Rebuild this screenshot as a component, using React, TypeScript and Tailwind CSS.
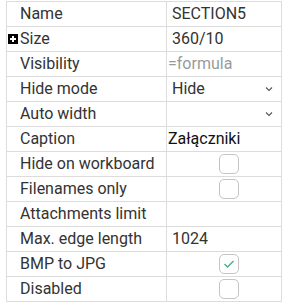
import React from "react";

type Row = {
  label: string;
  kind: "text" | "placeholder" | "select" | "check" | "empty" | "dark";
  value?: string;
  checked?: boolean;
  expand?: boolean;
};

const rows: Row[] = [
  { label: "Name", kind: "text", value: "SECTION5" },
  { label: "Size", kind: "text", value: "360/10", expand: true },
  { label: "Visibility", kind: "placeholder", value: "=formula" },
  { label: "Hide mode", kind: "select", value: "Hide" },
  { label: "Auto width", kind: "select", value: "" },
  { label: "Caption", kind: "dark", value: "Załączniki" },
  { label: "Hide on workboard", kind: "check" },
  { label: "Filenames only", kind: "check" },
  { label: "Attachments limit", kind: "empty" },
  { label: "Max. edge length", kind: "text", value: "1024" },
  { label: "BMP to JPG", kind: "check", checked: true },
  { label: "Disabled", kind: "check" },
];

function Chevron() {
  return (
    <svg width="8" height="6" viewBox="0 0 8 6" className="text-[#555]">
      <path d="M1 1.5 L4 4.5 L7 1.5" fill="none" stroke="currentColor" strokeWidth="1.1" />
    </svg>
  );
}

function Check({ checked }: { checked?: boolean }) {
  return (
    <div className="w-[20px] h-[20px] rounded-[5px] border border-[#c4c4c4] bg-white flex items-center justify-center">
      {checked && (
        <svg width="12" height="10" viewBox="0 0 12 10">
          <path d="M1.5 5 L4.5 8 L10.5 2" fill="none" stroke="#3fae8a" strokeWidth="1.3" />
        </svg>
      )}
    </div>
  );
}

function Value({ row }: { row: Row }) {
  switch (row.kind) {
    case "placeholder":
      return <span className="pl-[1px] text-[#9a9a9a]">{row.value}</span>;
    case "select":
      return (
        <div className="flex items-center justify-between pl-[5px] pr-[8px] w-full">
          <span>{row.value}</span>
          <Chevron />
        </div>
      );
    case "dark":
      return <span className="pl-[1px] text-[#111]">{row.value}</span>;
    case "check":
      return (
        <div className="w-full flex justify-center pl-[10px]">
          <Check checked={row.checked} />
        </div>
      );
    case "empty":
      return null;
    default:
      return <span className="pl-[5px]">{row.value}</span>;
  }
}

export default function App() {
  return (
    <div className="w-[286px] h-[304px] bg-white pt-[1px] pl-[6px]" style={{ fontFamily: "Roboto, sans-serif" }}>
      <div className="relative w-[276px] border-l border-r border-t border-[#dcdcdc] text-[16px] text-[#333]">
        {rows.map((row) => (
          <div key={row.label} className="relative flex h-[25px] border-b border-[#dcdcdc]">
            {row.expand && (
              <div className="absolute left-[1px] top-[7px] w-[10px] h-[10px] bg-black flex items-center justify-center">
                <svg width="8" height="8" viewBox="0 0 8 8">
                  <path d="M4 1 V7 M1 4 H7" stroke="white" strokeWidth="2" />
                </svg>
              </div>
            )}
            <div className="w-[160px] shrink-0 pl-[13px] overflow-hidden whitespace-nowrap flex items-center border-r border-[#dcdcdc]">
              {row.label}
            </div>
            <div className="flex-1 flex items-center overflow-hidden whitespace-nowrap">
              <Value row={row} />
            </div>
          </div>
        ))}
      </div>
    </div>
  );
}
